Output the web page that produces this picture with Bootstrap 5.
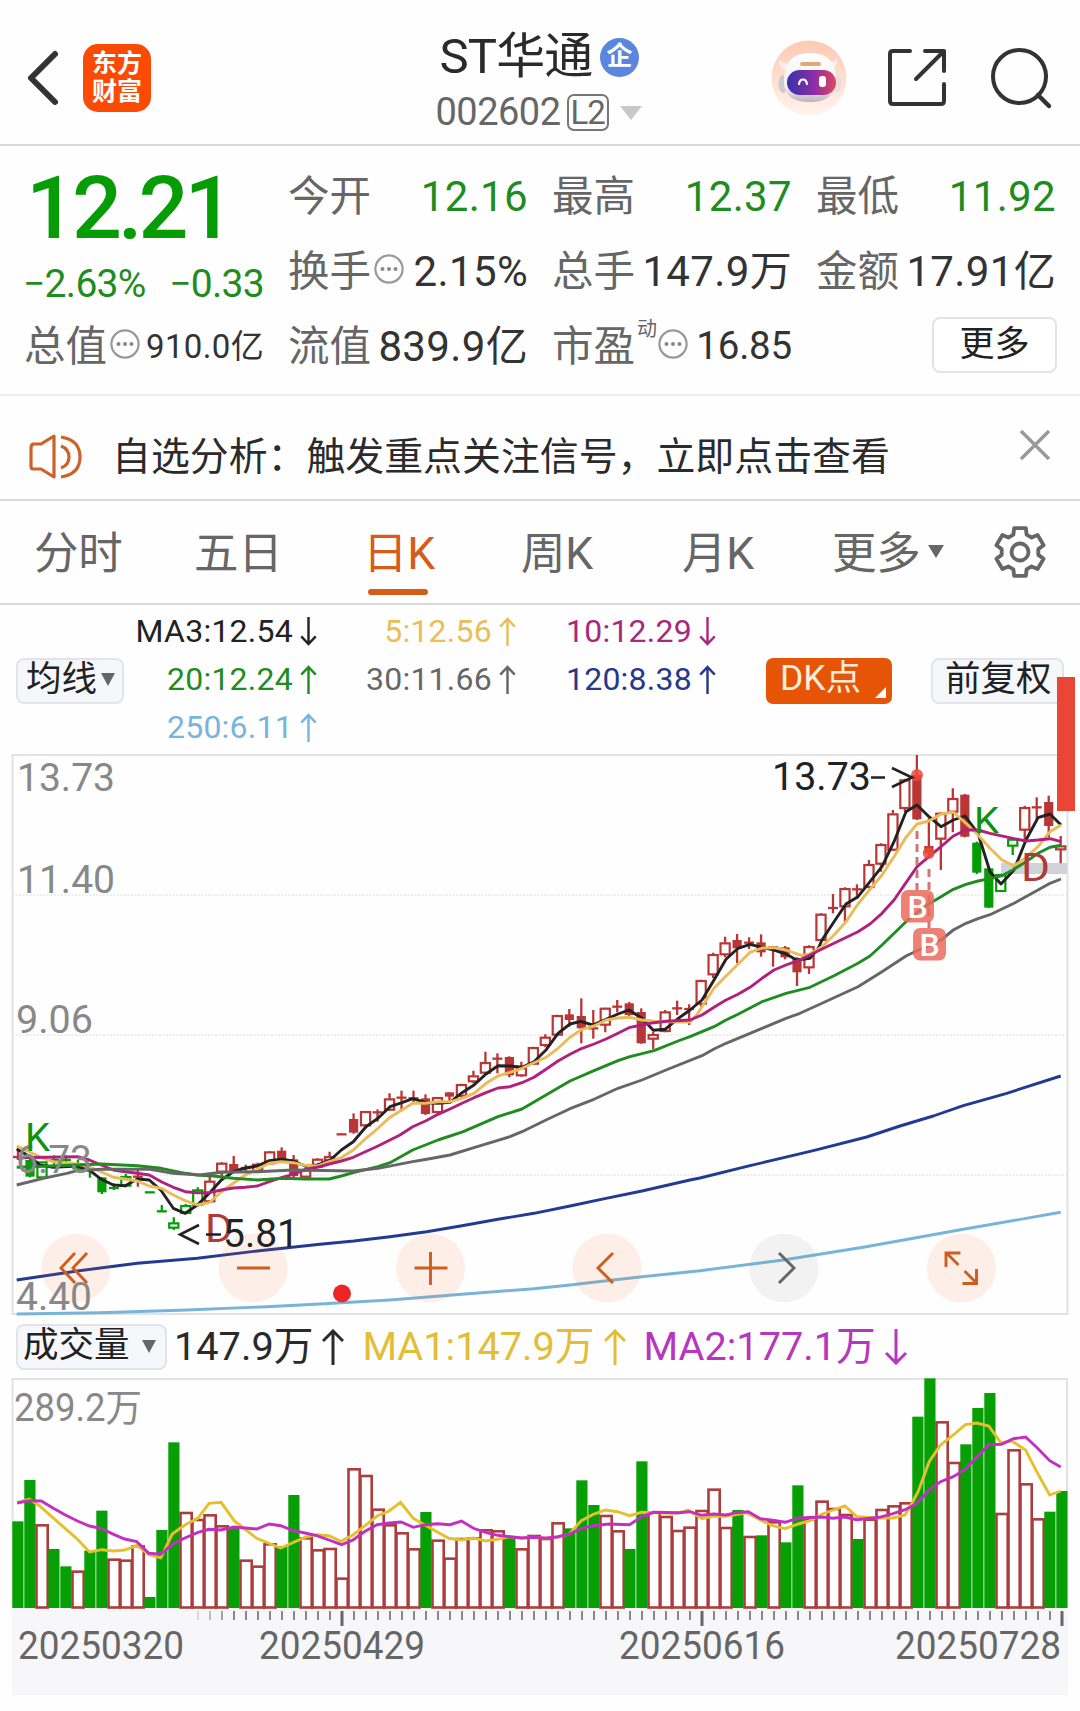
<!DOCTYPE html>
<html lang="zh-CN">
<head>
<meta charset="utf-8">
<meta name="viewport" content="width=device-width, initial-scale=1">
<title>ST华通 002602</title>
<link rel="stylesheet" href="https://cdn.jsdelivr.net/npm/bootstrap@5.3.0/dist/css/bootstrap.min.css">
<style>
  body{width:1080px;height:1711px;overflow:hidden;background:#fefefe;color:#2a2a2a;font-family:Roboto,"Noto Sans CJK SC",sans-serif;line-height:1}
  svg{display:block;flex:none;overflow:visible}
  .topbar{height:146px;border-bottom:2px solid #d9d9d9;padding:0 28px 0 26px}
  .side{width:340px;padding-top:12px}
  .logo-tile{width:68px;height:68px;border-radius:15px;background:#fb4a04;color:#fff;font-size:25px;font-weight:700;line-height:28px;margin-left:24px;padding:6px 0 0;text-align:center}
  .stock{padding-top:27px}
  .stock-name{font-size:49px;letter-spacing:-.8px;height:60px;line-height:60px}
  .ent{width:39px;height:39px;border-radius:50%;background:#5b86e0;color:#fff;font-size:26px;font-weight:700;line-height:37px;text-align:center;margin-left:7px}
  .code{font-size:38px;color:#666;letter-spacing:-.5px;height:40px;margin-top:5px}
  .lv{width:42px;height:37px;border:2px solid #777;border-radius:7px;font-size:33px;line-height:34px;text-align:center;letter-spacing:-1px;margin:0 10px 0 6px}
  .share{margin-left:41px}
  .search{margin-left:42px}
  .quote{height:250px;border-bottom:2px solid #eee;padding:13px 24px 0 25px}
  .qgrid{display:grid;grid-template-columns:239px 239px 239px 239px;column-gap:25px;grid-template-rows:75px 75px 75px}
  .cell{display:flex;align-items:center;justify-content:space-between;font-size:42px;height:75px;white-space:nowrap;color:#333}
  .cell .lbl{font-size:41.5px;color:#666;display:flex;align-items:center;margin-left:-1px}
  .lbl svg{margin:-6px 0 0 3px}
  .val{letter-spacing:.35px}
  .val-s{font-size:33px}
  .val-m{font-size:38.5px;letter-spacing:-.2px}
  .green{color:#1f8c1f}
  .pricebox{grid-row:1 / span 2;height:150px}
  .price{font-size:88px;font-weight:500;color:#069c06;letter-spacing:-4px;line-height:90px;padding:4px 0 0 1px}
  .chg{font-size:39px;letter-spacing:-.7px;color:#1f8c1f;padding-top:12px;margin-left:-2px}
  .morebtn{width:125px;height:56px;border:2px solid #e3e3e3;border-radius:8px;background:#fff;font-size:35px;line-height:1;padding:0;margin:-4px -1px 0 auto;color:#222}
  .dong{font-size:20px;align-self:flex-start;margin:-7px 0 0 2px}
  .lbl .dong + svg{margin-left:1px}
  .notice{height:105px;border-bottom:2px solid #d9d9d9;padding:19px 28px 0 29px}
  .notice span{font-size:38.9px;color:#2b2b2b;margin-left:29px;white-space:nowrap}
  .tabs{height:104px;border-bottom:2px solid #d9d9d9;display:grid;grid-template-columns:160px 169px 158px 161px 150px 161px 60px;padding-left:34px;align-items:center;font-size:44.5px;color:#666}
  .tabs a{color:#666;text-decoration:none;position:relative;white-space:nowrap;display:flex;align-items:center;letter-spacing:-.3px;padding-top:5px}
  .tabs a.on{color:#d65c18}
  .tabs a.on::after{content:"";position:absolute;left:5px;width:60px;height:6px;border-radius:3px;background:#d65c18;top:62px}
  .ma{height:149px;padding:2px 16px 0 16px;position:relative}
  .chip{height:46px;border:2px solid #e2e4e8;border-radius:8px;background:#f6f7fa;font-size:35.5px;color:#222;line-height:1;padding:0 5px 2px 8px;display:flex;align-items:center;white-space:nowrap}
  .chip-ma{width:108px}
  .chip-adj{margin-left:39px;width:133px;flex:none;padding-left:12px}
  .chip-vol{width:151px;padding-left:5px}
  .chip-dk{height:46px;width:126px;border-radius:7px;background:#e55505;color:#ffeedd;font-size:35.5px;padding:0 0 3px 14px;margin-left:50px;position:relative;display:flex;align-items:center;line-height:1}
  .chip-dk i{position:absolute;right:6px;bottom:6px;border-left:11px solid transparent;border-bottom:11px solid #fff}
  .magrid{display:grid;grid-template-columns:193px 199px 200px;grid-auto-rows:48px;font-size:32px}
  .magrid div{display:flex;align-items:center;justify-content:flex-end;white-space:nowrap;letter-spacing:.25px}
  .magrid svg{margin-left:7px}
  .volhead svg.ar{margin-left:9px}
  .strip{position:absolute;left:1057px;top:72px;width:18px;height:134px;background:#e94636;z-index:3}
  .volhead{height:62px;padding-left:16px;font-size:39.7px;white-space:nowrap}
  .c3{color:#222}.c5{color:#eabd55}.c10{color:#a8287c}.c20{color:#1f8c1f}.c30{color:#666}.c120{color:#27388c}.c250{color:#78b4dc}
  .v1{color:#e3bd38}.v2{color:#b636be}
</style>
<script src="https://cdn.jsdelivr.net/npm/bootstrap@5.3.0/dist/js/bootstrap.bundle.min.js"></script>
</head>
<body>
<svg width="0" height="0" class="position-absolute">
  <defs>
    <symbol id="up" viewBox="0 0 16 30"><path d="M8 30V2M0.500 10L8 2l7.500 8" fill="none" stroke="currentColor" stroke-width="2.500"/></symbol>
    <symbol id="dn" viewBox="0 0 16 30"><path d="M8 0v28M0.500 20l7.500 8 7.500-8" fill="none" stroke="currentColor" stroke-width="2.500"/></symbol>
    <symbol id="up2" viewBox="0 0 22 36"><path d="M11 36V2M1 12L11 2l10 10" fill="none" stroke="currentColor" stroke-width="3"/></symbol>
    <symbol id="dn2" viewBox="0 0 22 36"><path d="M11 0v34M1 24l10 10 10-10" fill="none" stroke="currentColor" stroke-width="3"/></symbol>
    <symbol id="info" viewBox="0 0 30 30"><circle cx="15" cy="15" r="13.6" fill="none" stroke="#999" stroke-width="2.2"/><g fill="#888"><circle cx="8.5" cy="15" r="2"/><circle cx="15" cy="15" r="2"/><circle cx="21.500" cy="15" r="2"/></g></symbol>
  </defs>
</svg>

<header class="topbar d-flex justify-content-between">
  <div class="side d-flex align-items-center">
    <svg width="33" height="56" viewBox="0 0 33 56"><path d="M29 4L5 28l24 24" fill="none" stroke="#333" stroke-width="6" stroke-linecap="round" stroke-linejoin="round"/></svg>
    <div class="logo-tile">东方<br>财富</div>
  </div>
  <div class="stock d-flex flex-column align-items-center">
    <div class="d-flex align-items-center stock-name"><span>ST华通</span><span class="ent">企</span></div>
    <div class="d-flex align-items-center code"><span>002602</span><span class="lv">L2</span>
      <svg width="24" height="15" viewBox="0 0 24 15"><path d="M1 1h22L12 15z" fill="#c8c8c8"/></svg></div>
  </div>
  <div class="side d-flex align-items-center justify-content-end">
    <svg width="76" height="76" viewBox="0 0 76 76">
      <defs><linearGradient id="bg" x2="0" y2="1"><stop stop-color="#fdc9b1"/><stop offset="1" stop-color="#fff4ee"/></linearGradient>
      <linearGradient id="vis"><stop stop-color="#3a2fae"/><stop offset=".55" stop-color="#8a2fa8"/><stop offset="1" stop-color="#e0455c"/></linearGradient>
      <linearGradient id="hd" x2="0" y2="1"><stop stop-color="#fff"/><stop offset=".7" stop-color="#f1eef1"/><stop offset="1" stop-color="#bdb5bc"/></linearGradient></defs>
      <circle cx="38" cy="38" r="37.500" fill="url(#bg)"/>
      <path d="M8 20c0 7 3 10 10 11l6-7c-7 1-12-1-16-4zM66 18c1 8-3 12-9 12l-6-7c8 1 12-1 15-5z" fill="#f6efee"/>
      <ellipse cx="12" cy="44" rx="4.500" ry="9" fill="#cfc9cf"/><ellipse cx="66" cy="43" rx="4.500" ry="9" fill="#e9dddf"/>
      <path d="M13 39C14 22 22 13 39 13s26 9 26 25c0 16-8 24-26 24S12 55 13 39z" fill="url(#hd)"/>
      <rect x="29" y="22" width="21" height="4" rx="2" fill="#dfa878"/>
      <rect x="16" y="30" width="49" height="25" rx="12.500" fill="url(#vis)"/>
      <path d="M28 44c1-6 7-6 8 0" fill="none" stroke="#fff" stroke-width="2.200" stroke-linecap="round"/><rect x="48" y="36" width="7" height="11" rx="3" fill="#fff"/>
    </svg>
    <svg class="share" width="60" height="60" viewBox="0 0 60 60"><path d="M22 3H5Q2 3 2 6v47q0 3 3 3h48q3 0 3-3V36M37 3h19v20M55 4L28 31" fill="none" stroke="#333" stroke-width="4" stroke-linecap="round" stroke-linejoin="round"/></svg>
    <svg class="search" width="62" height="62" viewBox="0 0 62 62"><circle cx="29.500" cy="29.500" r="26.500" fill="none" stroke="#333" stroke-width="4"/><path d="M48 48l11 11" stroke="#333" stroke-width="4.500" stroke-linecap="round"/></svg>
  </div>
</header>

<section class="quote">
  <div class="qgrid">
    <div class="pricebox">
      <div class="price">12.21</div>
      <div class="chg d-flex justify-content-between"><span>−2.63%</span><span>−0.33</span></div>
    </div>
    <div class="cell"><span class="lbl">今开</span><span class="val green">12.16</span></div>
    <div class="cell"><span class="lbl">最高</span><span class="val green">12.37</span></div>
    <div class="cell"><span class="lbl">最低</span><span class="val green">11.92</span></div>
    <div class="cell"><span class="lbl">换手<svg width="30" height="30"><use href="#info"/></svg></span><span class="val">2.15%</span></div>
    <div class="cell"><span class="lbl">总手</span><span class="val">147.9万</span></div>
    <div class="cell"><span class="lbl">金额</span><span class="val">17.91亿</span></div>
    <div class="cell"><span class="lbl">总值<svg width="30" height="30"><use href="#info"/></svg></span><span class="val val-s">910.0亿</span></div>
    <div class="cell"><span class="lbl">流值</span><span class="val">839.9亿</span></div>
    <div class="cell"><span class="lbl">市盈<span class="dong">动</span><svg width="30" height="30"><use href="#info"/></svg></span><span class="val val-m">16.85</span></div>
    <div class="cell"><button class="btn morebtn">更多</button></div>
  </div>
</section>

<section class="notice d-flex align-items-center">
  <svg width="54" height="46" viewBox="0 0 54 46"><path d="M4 10q-2 1-2 4v18q0 3 2 3h8l13 8V2L12 10zM32 12q8 3 8 11t-8 11M32 3q19 3 19 20T32 43" fill="none" stroke="#cc6228" stroke-width="3.200" stroke-linejoin="round"/></svg>
  <span>自选分析：触发重点关注信号，立即点击查看</span>
  <svg class="ms-auto" width="34" height="34" viewBox="0 6 34 34"><path d="M3 -3L31 25M31 -3L3 25" stroke="#999" stroke-width="3.400"/></svg>
</section>

<nav class="tabs">
  <a href="#">分时</a><a href="#">五日</a><a href="#" class="on">日K</a><a href="#">周K</a><a href="#">月K</a>
  <a href="#">更多<svg class="ms-2" width="16" height="13" viewBox="0 3 16 13"><path d="M0 0h16L8 13z" fill="#666"/></svg></a>
  <svg width="54" height="54" viewBox="-27 -27 54 54" fill="none" stroke="#666" stroke-width="3.800" stroke-linejoin="round"><circle r="8.500"/><path id="gear"/></svg>
</nav>

<section class="ma d-flex">
  <div class="chip chip-ma my-auto">均线<svg class="ms-1" width="14" height="13" viewBox="0 0 14 13"><path d="M0 0h14L7 13z" fill="#666"/></svg></div>
  <div class="magrid">
    <div class="c3">MA3:12.54<svg width="17" height="29"><use href="#dn"/></svg></div>
    <div class="c5">5:12.56<svg width="17" height="29"><use href="#up"/></svg></div>
    <div class="c10">10:12.29<svg width="17" height="29"><use href="#dn"/></svg></div>
    <div class="c20">20:12.24<svg width="17" height="29"><use href="#up"/></svg></div>
    <div class="c30">30:11.66<svg width="17" height="29"><use href="#up"/></svg></div>
    <div class="c120">120:8.38<svg width="17" height="29"><use href="#up"/></svg></div>
    <div class="c250">250:6.11<svg width="17" height="29"><use href="#up"/></svg></div>
  </div>
  <div class="chip-dk my-auto">DK点<i></i></div>
  <div class="chip chip-adj my-auto">前复权</div>
  <div class="strip"></div>
</section>

<svg id="kchart" width="1080" height="562" viewBox="0 754 1080 562" font-family="Roboto"></svg>

<section class="volhead d-flex align-items-center">
  <div class="chip chip-vol">成交量<svg class="ms-auto me-1" width="14" height="13" viewBox="0 0 14 13"><path d="M0 0h14L7 13z" fill="#666"/></svg></div>
  <span style="margin-left:7px">147.9万</span><svg class="ar" width="22" height="36"><use href="#up2"/></svg>
  <span class="v1" style="margin-left:18px">MA1:147.9万</span><svg class="ar v1" width="22" height="36"><use href="#up2"/></svg>
  <span class="v2" style="margin-left:18px">MA2:177.1万</span><svg class="ar v2" width="22" height="36"><use href="#dn2"/></svg>
</section>

<svg id="vchart" width="1080" height="331" viewBox="0 1378 1080 331" font-family='Roboto,"Noto Sans CJK SC",sans-serif'></svg>

<script>
// gear outline
(function(){
  let d='';
  for(let k=0;k<6;k++){
    const a=k*60-90, p=(r,t)=>{const q=(a+t)*Math.PI/180;return (r*Math.cos(q)).toFixed(1)+' '+(r*Math.sin(q)).toFixed(1)};
    d+=(k?'L':'M')+p(18.5,-21)+'L'+p(24.5,-14)+'L'+p(24.5,14)+'L'+p(18.5,21);
  }
  document.getElementById('gear').setAttribute('d',d+'Z');
})();

const RED='#b83636', GREEN='#069c06', PITCH=11.985, X=i=>18+PITCH*i;
// segments: [x origin, y origin, points at 3 units per pixel]
function join(segs){
  let last=-1,out=[];
  for(const [ox,oy,s] of segs) for(const t of s.split(' ')){
    const [a,b]=t.split(',').map(Number), x=ox+a/3, y=oy+b/3;
    if(x>last){out.push(x.toFixed(1)+','+y.toFixed(1));last=x}
  }
  return out.join(' ');
}
const A=s=>[0,1080,s],B=s=>[320,960,s],C=s=>[680,750,s],D=s=>[700,1060,s];
const lines=[
 ['#222',[A('50,207 90,230 120,255 160,262 232,258 270,272 304,298 340,315 376,317 412,297 448,300 484,332 520,385 556,400 592,375 628,340 664,300 700,275 736,264 772,258 808,242 844,238 880,243 916,258 952,255 988,243 1024,210 1060,185'),B('138,500 174,475 210,440 246,428 278,416 318,428 354,430 390,427 426,398 462,375 498,342 534,317 570,318 606,322 642,305 678,270 714,220 750,192 782,184 818,195 858,178 894,162 927,150 966,175 1000,211 1035,208 1074,176 1110,150 1146,120'),C('102,690 138,628 174,595 210,583 246,592 282,600 318,612 350,630 390,625 415,595 426,570 462,515 498,462 534,440 570,395 606,350 642,275 678,185 711,165 747,200 783,230 820,210 855,198 894,250 930,365 963,402 1002,360 1038,270 1074,203 1110,192 1143,225')]],
 ['#eabb58',[A('50,198 90,217 130,235 160,245 232,252 270,262 304,275 340,292 412,303 448,318 484,325 520,345 556,362 592,375 628,368 664,335 700,310 736,285 772,268 808,250 844,245 880,248 916,256 952,258 988,245 1024,233 1060,210'),B('138,535 174,505 210,472 246,450 278,430 318,430 354,425 390,425 426,415 462,400 498,370 534,348 570,337 606,325 642,308 678,292 714,265 750,232 786,208 822,198 858,180 894,174 930,172 966,180 1002,184 1074,186 1110,186 1130,165 1146,140'),C('102,715 138,678 174,643 210,607 246,594 282,593 318,600 366,617 390,612 426,590 462,555 498,515 534,462 570,418 606,375 642,320 678,262 711,222 747,213 783,192 820,186 858,220 894,255 930,295 966,330 1002,348 1038,322 1074,290 1110,245 1143,225')]],
 ['#b0207c',[A('50,233 232,230 268,240 304,255 340,270 376,275 412,280 448,285 484,305 520,322 556,335 592,338 628,338 664,330 700,324 736,322 772,318 808,305 844,293 880,283 916,268 952,262 988,252 1024,243 1060,232'),B('174,558 240,525 278,500 318,482 354,463 390,447 426,430 462,413 498,398 534,384 570,380 606,368 642,352 678,328 714,303 750,283 786,265 822,252 858,237 894,220 930,202 966,195 1002,188 1038,184 1110,180 1146,165'),C('102,772 138,750 174,733 210,712 246,685 282,660 318,645 354,632 390,615 426,597 462,580 534,545 570,522 606,490 642,450 678,398 711,350 747,320 783,290 820,258 858,240 894,240 930,250 1002,266 1038,273 1074,270 1110,266 1143,275')]],
 ['#1f8c1f',[A('50,262 232,255 304,252 412,257 484,265 556,280 592,285 640,288 700,295 772,300 850,295 916,297 988,297 1024,288 1060,278'),B('174,620 210,608 278,570 354,540 430,515 534,470 606,447 678,405 750,363 822,332 894,302 930,290 1002,272 1074,243 1110,230 1146,215'),C('102,830 138,810 174,793 246,755 318,730 390,712 462,677 534,640 570,618 606,585 678,515 711,487 750,460 783,440 820,418 858,403 894,393 930,386 966,377 1002,358 1038,335 1074,310 1110,292 1143,286')]],
 ['#666',[A('50,315 130,295 200,280 232,272 304,268 450,268 520,280 600,285 664,277 772,275 880,270 1060,273'),B('174,625 278,605 320,598 390,585 462,563 570,530 606,515 678,480 750,446 822,418 894,385 966,360 1038,330 1146,287'),C('102,897 138,880 246,835 318,805 360,790 426,760 534,710 606,665 678,618 711,602 750,585 783,570 820,540 858,520 894,506 930,494 1002,460 1074,420 1110,400 1143,387')]],
 ['#233a92',[A('50,600 232,573 412,550 592,535 772,513 960,493'),B('102,843 210,830 320,815 426,797 534,778 642,760 750,738 858,715 966,693 1110,660'),D('0,354 150,317 340,272 500,231 600,198 700,168 790,137 920,100 1082,48')]],
 ['#78b4d8',[A('50,702 300,698 560,690 800,680 960,672'),B('210,1020 426,1003 642,986 750,975 860,962 966,950'),D('0,632 250,600 490,562 790,508 1082,457')]]
];
// candles: type, top, bottom, high, low (R/G hollow, r/g solid, x/y cross); one string per vertical origin
const kd=[
 [1080,`x 231 231 205 240|g 240 290 235 292|G 245 292 245 292|y 240 240 226 262|y 240 240 226 262|G 250 264 240 266|y 270 270 260 293|g 292 337 292 342|y 324 324 310 330|G 289 317 282 322|x 290 290 270 320|y 337 337 337 337|y 394 394 375 394|G 428 443 412 450|G 376 399 372 402|G 329 374 322 380|R 303 364 290 368|R 249 275 247 290|r 252 275 228 278|x 264 264 254 275|R 252 270 248 272|R 215 250 213 252|r 212 238 202 240|r 238 288 225 300|R 270 290 262 294|R 237 260 235 264|R 229 240 215 243|x 163 163 163 163`],
 [960,`r 477 518 460 521|R 454 496 453 500|x 457 457 448 485|R 416 449 400 452|x 413 413 392 450|x 415 415 392 430|r 415 462 403 465|R 412 456 411 460|r 397 410 397 425|R 373 407 371 413|R 347 364 332 370|R 307 338 275 345|x 296 296 280 340|r 291 346 289 352|R 323 346 305 350|R 262 311 260 314|R 231 255 223 262|R 166 224 164 226|r 163 180 147 200|r 168 205 115 250|x 205 205 150 236|R 144 194 143 217|x 140 140 120 157|r 130 165 126 168|r 156 250 145 251|R 223 236 215 268|R 155 213 150 217|x 145 145 122 165|x 147 147 133 195`],
 [750,`R 691 761 689 770|R 613 673 608 684|R 578 613 560 622|r 570 595 552 640|x 578 578 562 597|r 577 607 553 620|x 592 592 588 650|r 592 622 588 628|r 625 667 622 708|R 589 652 586 672|R 492 570 490 572|x 474 474 432 490|R 415 469 412 520|x 418 418 403 447|R 343 411 330 415|R 283 341 280 365|R 191 299 180 302|R 89 174 86 185|r 75 208 15 210|r 288 310 205 320|R 189 266 187 360|R 145 185 115 247|r 134 260 132 262|g 278 368 275 372|g 355 473 348 474|G 373 423 371 425|G 267 287 265 315|R 172 239 167 268|x 172 172 142 207|r 156 228 137 262|R 287 298 258 340`]
];
const T=(x,y,s,w,c,f=38,extra='')=>`<text x="${x}" y="${y}" font-size="${f}" fill="${c}" textLength="${w}" lengthAdjust="spacingAndGlyphs" ${extra}>${s}</text>`;
let h='';
for(const y of [895,1035,1175]) h+=`<path d="M12 ${y}H1067" stroke="#dcdcdc" stroke-dasharray="2 1.500"/>`;
h+='<rect x="12.500" y="755" width="1055" height="559" fill="none" stroke="#e2e2e2" stroke-width="2"/>';
h+='<rect x="1001" y="863" width="66" height="11" fill="#cfd2d9"/>';
let i=0;
for(const [oy,s] of kd) for(const c of s.split('|')){
  const p=c.split(' '),t=p[0],[a,b,hi,lo]=p.slice(1).map(v=>oy+v/3),x=X(i++),col='Rrx'.includes(t)?RED:GREEN;
  if(hi<lo) h+= (t=='R'||t=='G')?`<path d="M${x} ${hi}V${a}M${x} ${b}V${lo}" stroke="${col}" stroke-width="2.300"/>`:`<path d="M${x} ${hi}V${lo}" stroke="${col}" stroke-width="2.300"/>`;
  if(t=='R'||t=='G') h+=`<rect x="${x-4.6}" y="${a+.7}" width="9.200" height="${Math.max(2,b-a-.7)}" fill="none" stroke="${col}" stroke-width="2.200"/>`;
  else if(t=='x'||t=='y') h+=`<path d="M${x-5} ${a}h10" stroke="${col}" stroke-width="2.300"/>`;
  else h+=`<rect x="${x-4.6}" y="${a}" width="9.200" height="${b-a}" fill="${col}"/>`;
}
for(const [c,s] of lines) h+=`<polyline points="${join(s)}" fill="none" stroke="${c}" stroke-width="2.900" stroke-linejoin="round"/>`;
h+='<path d="M917 831v59M929 869v59" stroke="#cf7777" stroke-width="3" stroke-dasharray="8 5"/>';
h+='<g fill="#ef4a3c" fill-opacity=".85"><circle cx="917" cy="775" r="6"/><circle cx="928.700" cy="853" r="6"/></g>';
for(const [x,y] of [[901,890],[913,928]]) h+=`<rect x="${x}" y="${y}" width="33" height="32.500" rx="7" fill="#ec6a5c" fill-opacity=".85"/><text x="${x+16.5}" y="${y+27.5}" font-size="32" font-weight="500" fill="#fff" text-anchor="middle">B</text>`;
// floating control buttons
const btn=[[76,'M-1 -15l-14 15l14 15M11 -15l-14 15l14 15'],[253,'M-16 0H17'],[430.500,'M-16 0H17M0 -16V17'],[607,'M6 -15l-15 15l15 15'],[784,'M-5 -15l15 15l-15 15'],[961.500,'M-3 -3L-15 -15M-15.500 -1V-15H-1M3 3L15 15M1 15.500H15V1']];
btn.forEach(([x,d],k)=>{h+=`<g transform="translate(${x} 1268)"><circle r="34.500" fill="${k==4?'#888':'#f96a20'}" fill-opacity=".1"/><path d="${d}" fill="none" stroke="${k==4?'#666':'#cc5f20'}" stroke-width="2.900"/></g>`});
h+='<circle cx="342" cy="1293.500" r="9" fill="#ee2424"/>';
const g='#888';
h+=T(17,791,'13.73',98,g)+T(17,893,'11.40',98,g)+T(16,1033,'9.06',77,g)+T(16,1173,'6.73',76,g)+T(16,1310,'4.40',76,g);
h+=T(25,1151,'K',25,'#0f930f',39)+T(205,1242,'D',28,'#b03a3a',39)+T(974,833,'K',25,'#0f930f',36)+T(1021,881,'D',29,'#b03a3a',39);
h+=T(772,790,'13.73',99,'#222',39)+T(223,1247,'5.81',76,'#222',39);
h+='<path d="M871 777.500h14M892 768l20 9.500l-20 9.500M199 1225l-19 9.500l19 9.500M206 1234.500h15" fill="none" stroke="#222" stroke-width="2.600"/>';
document.getElementById('kchart').innerHTML=h;

// volume bars, top edges at 3 units per pixel below y=1310
const vol='G634 G510 R643 G717 G769 R782 G722 G602 R746 R749 R706 G861 G660 G397 R606 R627 R613 R646 G652 R749 R767 R700 G708 G555 R682 R718 R714 R803 R475 R495 R596 R643 R667 R715 G606 R689 R743 R684 R682 R658 R661 G684 R715 R675 R684 R637 G655 G511 G585 R615 R661 G717 G454 R605 R618 R660 R650 R600 R536 R651 G600 R678 G676 R634 G697 G526 R625 R572 R594 R612 G687 R626 R597 R586 R577 G320 G205 R334 R456 G403 G294 G249 R609 R418 R520 R625 G605 G543'.split(' ');
const vy='50,578 85,567 115,588 150,620 222,685 260,726 295,719 330,723 362,720 397,706 432,734 467,743 500,672 537,645 575,624 607,580 642,577 680,632 745,685 815,714 885,682 920,674 955,677 990,694 1025,675 1060,647 1095,618 1130,603 1163,577 1200,625 1235,646 1303,685 1340,690 1375,684 1410,693 1445,688 1480,680 1515,684 1550,682|17,684 52,682 85,672 120,632 155,613 190,600 225,605 260,617 295,607 365,609 400,610 430,600 470,626 505,618 540,619 600,608 640,630 675,647 712,656 750,642 785,632 820,612 885,588 920,620 985,624 1025,624 1060,615 1080,580 1098,545 1130,455 1163,405 1200,375 1235,344 1268,339 1303,348 1338,398 1370,393 1410,420 1445,490 1480,555 1512,543';
const vp='50,579 85,572 120,573 155,595 190,615 225,633 260,648 295,656 330,673 362,687 397,695 432,730 467,733 500,703 537,684 575,667 607,658 640,660 680,651 745,657 782,642 815,647 850,661 885,669 920,677 955,690 992,704 1025,690 1060,664 1095,644 1130,639 1165,636 1200,652 1235,644 1270,641 1307,644 1340,633 1375,655 1410,667 1445,676 1480,680 1515,684 1550,682|17,685 52,680 85,672 120,656 155,647 200,642 260,644 295,620 330,607 400,608 435,605 470,616 505,612 540,615 570,608 605,605 640,626 675,631 712,637 750,624 820,621 850,625 885,621 920,629 985,622 1025,611 1060,599 1095,580 1130,540 1163,515 1200,500 1235,478 1303,404 1340,403 1375,386 1410,381 1445,415 1480,452 1512,471';
const vl=s=>s.split('|').map((q,k)=>q.split(' ').map(t=>{const [a,b]=t.split(',');return (k*540+a/2.9037).toFixed(1)+','+(1310+b/3).toFixed(1)}).join(' ')).join(' ');
let v='<rect x="12" y="1609" width="1056" height="86" fill="#f7f7fa"/><path d="M12.500 1608V1379H1067V1608" fill="none" stroke="#e2e2e2" stroke-width="2"/>';
v+=T(14,1421,'289.2万',128,g);
vol.forEach((s,k)=>{const y=1310+s.slice(1)/3,x=12.3+k*12;
  v+=s[0]=='G'?`<rect x="${x}" y="${y}" width="11.200" height="${1608-y}" fill="#06a006"/>`:`<rect x="${x+.2}" y="${y+1}" width="11.200" height="${1606.5-y}" fill="#fff" stroke="#ad3c3c" stroke-width="2.600"/>`;});
v+=`<polyline points="${vl(vy)}" fill="none" stroke="#e6c02c" stroke-width="2.900"/><polyline points="${vl(vp)}" fill="none" stroke="#c32fc0" stroke-width="2.900"/>`;
for(let k=15;k<88;k++){const big=k==27||k==57||k==87;v+=`<path d="M${18+k*12} 1611v${big?15:9}" stroke="#666" stroke-width="${big?3:1.8}" opacity="${big?1:Math.min(.85,(k-14)*.22)}"/>`}
[[18,'20250320'],[259,'20250429'],[619,'20250616'],[895,'20250728']].forEach(([x,s])=>v+=T(x,1659,s,166,'#666'));
document.getElementById('vchart').innerHTML=v;
</script>
</body>
</html>
